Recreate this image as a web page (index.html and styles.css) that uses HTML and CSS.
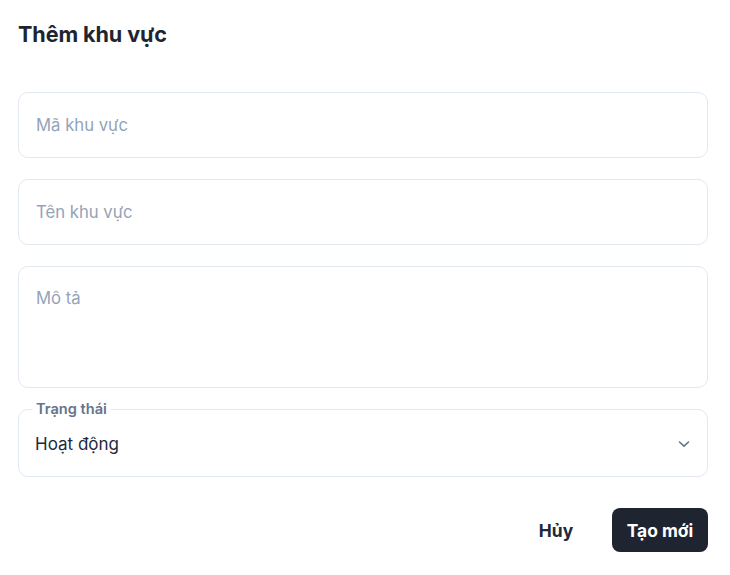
FILE: index.html
```html
<!DOCTYPE html>
<html lang="vi">
<head>
<meta charset="utf-8">
<title>Thêm khu vực</title>
<link rel="stylesheet" href="styles.css">
</head>
<body>
<div class="dialog">
  <h2 class="title">Thêm khu vực</h2>
  <form class="form">
    <div class="field"><input class="input" type="text" placeholder="Mã khu vực"></div>
    <div class="field"><input class="input" type="text" placeholder="Tên khu vực"></div>
    <div class="field"><textarea class="input textarea" placeholder="Mô tả"></textarea></div>
    <div class="field select-field">
      <fieldset class="outline"><legend class="legend">Trạng thái</legend></fieldset>
      <div class="select-value">Hoạt động</div>
      <svg class="chevron" width="16" height="16" viewBox="0 0 16 16"><path d="M3.5 6 L8 10.2 L12.5 6" fill="none" stroke="#64748b" stroke-width="1.6" stroke-linecap="round" stroke-linejoin="round"/></svg>
    </div>
  </form>
  <div class="actions">
    <button class="btn btn-ghost" type="button">Hủy</button>
    <button class="btn btn-primary" type="button">Tạo mới</button>
  </div>
</div>
</body>
</html>
```

FILE: styles.css
```css
* { box-sizing: border-box; }
html, body { margin: 0; padding: 0; background: #ffffff; }
body { font-family: Inter, "Noto Sans", sans-serif; color: #1e293b; }
.dialog { padding: 21px 22px 0 18px; }
.title { margin: 0; font-size: 21.6px; font-weight: 700; line-height: 26px; color: #1e2530; letter-spacing: -0.1px; }
.form { margin-top: 45px; display: flex; flex-direction: column; gap: 21px; }
.field { position: relative; }
.input { display: block; width: 100%; height: 66px; border: 1px solid #e2e8f0; border-radius: 10px; padding: 0 17px; font-family: inherit; font-size: 16.7px; color: #1e293b; background: #fff; outline: none; }
.input::placeholder { color: #94a3b8; }
.textarea { height: 122px; padding-top: 20px; resize: none; line-height: 22px; }
.select-field { height: 67px; display: flex; align-items: center; padding: 0 16px 0 17px; margin-top: 1px; }
.outline { position: absolute; inset: -8px 0 0 0; margin: 0; padding: 0 10px; border: 1px solid #e2e8f0; border-radius: 10px; pointer-events: none; }
.legend { padding: 0 4px; font-size: 14.6px; font-weight: 600; color: #64748b; line-height: 14px; margin-left: 3px; }
.select-value { flex: 1; font-size: 17px; color: #1e293b; }
.chevron { flex: none; }
.actions { display: flex; justify-content: flex-end; align-items: center; gap: 20px; margin-top: 31px; }
.btn { font-family: inherit; font-size: 17.4px; font-weight: 700; border: none; border-radius: 8px; height: 44px; cursor: pointer; padding: 0; }
.btn-ghost { background: transparent; color: #1e293b; width: 72px; }
.btn-primary { background: #1e2530; color: #fff; width: 96px; }
```
